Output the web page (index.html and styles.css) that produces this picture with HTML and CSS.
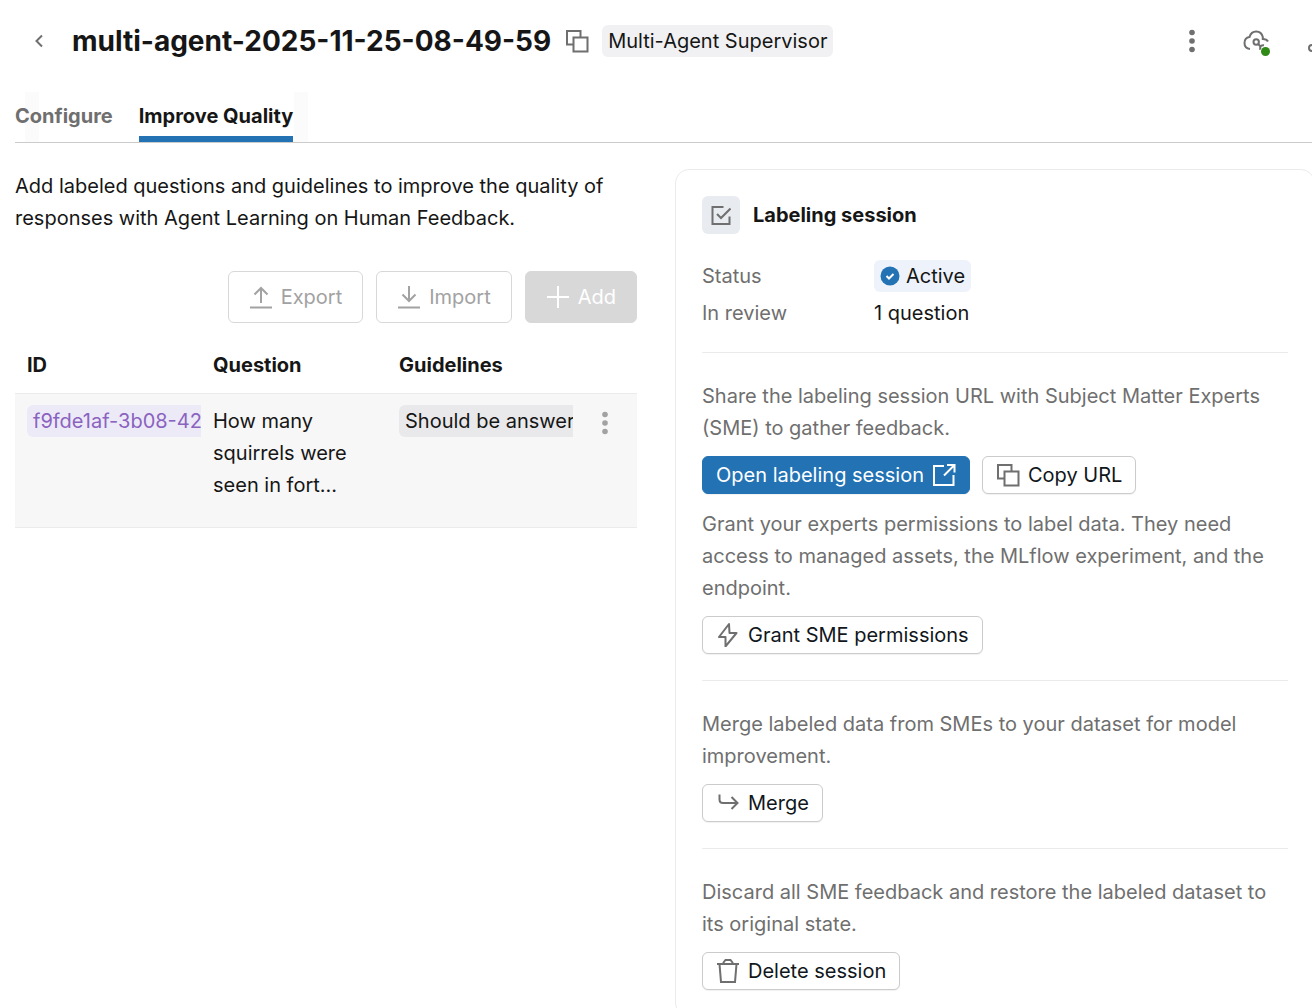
FILE: index.html
```
<!DOCTYPE html>
<html lang="en">
<head>
    <meta charset="UTF-8">
    <meta name="viewport" content="width=device-width, initial-scale=1.0">
    <title>multi-agent-2025-11-25-08-49-59</title>
    <link rel="stylesheet" href="styles.css">
</head>
<body>
    <!-- Shared icons -->
    <svg class="icon-defs" aria-hidden="true">
        <symbol id="icon-copy" viewBox="0 0 24 24">
            <path d="M8 15.500H2V2H15.500V8M8.500 8.500H22.500V22.500H8.500Z" fill="none" stroke="currentColor" stroke-width="2"/>
        </symbol>
        <symbol id="icon-dots" viewBox="0 0 24 24">
            <circle cx="12" cy="3.500" r="2.800"/>
            <circle cx="12" cy="12" r="2.800"/>
            <circle cx="12" cy="20.500" r="2.800"/>
        </symbol>
    </svg>

    <header class="page-header">
        <button class="icon-button back-button" aria-label="Back">
            <svg class="icon" viewBox="0 0 24 24"><path d="M15 6.500 9.500 12l5.500 5.500" fill="none" stroke="currentColor" stroke-width="2"/></svg>
        </button>
        <h1>multi-agent-2025-11-25-08-49-59</h1>
        <button class="icon-button copy-name" aria-label="Copy name">
            <svg class="icon"><use href="#icon-copy"/></svg>
        </button>
        <span class="tag">Multi-Agent Supervisor</span>
        <div class="header-actions">
            <button class="icon-button" aria-label="More">
                <svg class="icon" fill="currentColor"><use href="#icon-dots"/></svg>
            </button>
            <button class="icon-button status-button" aria-label="Endpoint status">
                <svg class="icon cloud-icon" viewBox="0 0 26 24" fill="none" stroke="currentColor" stroke-width="2">
                    <path d="M7 20C3.500 19.500 1.500 17 1.500 14C1.500 11 3.500 8.500 6.500 8C7.500 4.500 10 2.500 13.200 2.500C16.500 2.500 19 4.800 19.800 8V10C22 10 24 10.700 25 12.500"/>
                    <circle cx="13.200" cy="13" r="2.700"/>
                    <path d="M15.200 15 17.500 17.500M21 16.200C18.500 15.800 16.500 17.500 17.200 20.800"/>
                </svg>
                <span class="status-dot"></span>
            </button>
            <button class="icon-button" aria-label="Share">
                <svg class="icon" viewBox="0 0 24 24" fill="none" stroke="currentColor" stroke-width="2">
                    <circle cx="4" cy="19" r="3"/><circle cx="12" cy="5" r="3"/><circle cx="20" cy="19" r="3"/>
                    <path d="M10.500 8 6 16.500M13.500 8 18 16.500"/>
                </svg>
            </button>
        </div>
    </header>

    <nav class="tabs">
        <div class="tab-list">
            <a href="#configure">Configure</a>
            <a href="#quality" class="active">Improve Quality</a>
        </div>
    </nav>

    <main class="content">
        <section class="questions">
            <p>Add labeled questions and guidelines to improve the quality of responses with Agent Learning on Human Feedback.</p>
            <div class="toolbar">
                <button class="btn btn-large" disabled>
                    <svg class="icon" viewBox="0 0 24 24" fill="none" stroke="currentColor" stroke-width="2"><path d="M1 22.500H23M12 18V3M5.500 9.500 12 3l6.500 6.500"/></svg>
                    Export
                </button>
                <button class="btn btn-large" disabled>
                    <svg class="icon" viewBox="0 0 24 24" fill="none" stroke="currentColor" stroke-width="2"><path d="M1 22.500H23M12 1V16M5.500 9.500 12 16l6.500-6.500"/></svg>
                    Import
                </button>
                <button class="btn btn-large btn-add" disabled>
                    <svg class="icon" viewBox="0 0 24 24" fill="none" stroke="currentColor" stroke-width="2"><path d="M12 1V23M1 12H23"/></svg>
                    Add
                </button>
            </div>
            <table>
                <thead>
                    <tr>
                        <th>ID</th>
                        <th>Question</th>
                        <th>Guidelines</th>
                        <th class="actions-col" aria-label="Actions"></th>
                    </tr>
                </thead>
                <tbody>
                    <tr>
                        <td><div class="clip"><a href="#f9fde1af" class="tag tag-id">f9fde1af-3b08-42</a></div></td>
                        <td>How many squirrels were seen in fort...</td>
                        <td><div class="clip"><span class="tag tag-guideline">Should be answer</span></div></td>
                        <td class="actions-col">
                            <button class="icon-button row-menu" aria-label="Row actions">
                                <svg class="icon" fill="currentColor"><use href="#icon-dots"/></svg>
                            </button>
                        </td>
                    </tr>
                </tbody>
            </table>
        </section>

        <aside class="card">
            <div class="card-title">
                <span class="card-icon">
                    <svg viewBox="0 0 20 20" fill="none" stroke="currentColor" stroke-width="2"><path d="M12.500 2H1.500V19H18.500V11.500M6 9l4 4L19.500 3.500"/></svg>
                </span>
                <h2>Labeling session</h2>
            </div>
            <dl>
                <dt>Status</dt>
                <dd>
                    <span class="tag tag-active">
                        <svg viewBox="0 0 20 20"><circle cx="10" cy="10" r="9.500" fill="#2272b4"/><path d="M6.500 10l2.500 2.500 4.500-4.500" fill="none" stroke="#fff" stroke-width="2"/></svg>
                        Active
                    </span>
                </dd>
                <dt>In review</dt>
                <dd>1 question</dd>
            </dl>

            <div class="card-section">
                <p>Share the labeling session URL with Subject Matter Experts (SME) to gather feedback.</p>
                <div class="button-row">
                    <button class="btn btn-primary">
                        Open labeling session
                        <svg class="icon" viewBox="0 0 24 24" fill="none" stroke="currentColor" stroke-width="2"><path d="M12 3H2V22H21.500V12M15 2H22.500V9.500M22 2.500 12 12.500"/></svg>
                    </button>
                    <button class="btn">
                        <svg class="icon"><use href="#icon-copy"/></svg>
                        Copy URL
                    </button>
                </div>
                <p>Grant your experts permissions to label data. They need access to managed assets, the MLflow experiment, and the endpoint.</p>
                <div class="button-row">
                    <button class="btn">
                        <svg class="icon" viewBox="0 0 24 24" fill="none" stroke="currentColor" stroke-width="2" stroke-linejoin="round"><path d="M13 1 3 14H9.500V23.500L20.500 10H13.500Z"/></svg>
                        Grant SME permissions
                    </button>
                </div>
            </div>

            <div class="card-section">
                <p>Merge labeled data from SMEs to your dataset for model improvement.</p>
                <div class="button-row">
                    <button class="btn">
                        <svg class="icon" viewBox="0 0 24 24" fill="none" stroke="currentColor" stroke-width="2"><path d="M3.500 3.500V8.500Q3.500 12 7 12H21M15.500 6 21.500 12l-6 6"/></svg>
                        Merge
                    </button>
                </div>
            </div>

            <div class="card-section">
                <p>Discard all SME feedback and restore the labeled dataset to its original state.</p>
                <div class="button-row">
                    <button class="btn">
                        <svg class="icon" viewBox="0 0 24 24" fill="none" stroke="currentColor" stroke-width="2"><path d="M1 5H23M7.500 5V3.500L9.500 1H14.500L16.500 3.500V5M3.500 5 5 23H19L20.500 5"/></svg>
                        Delete session
                    </button>
                </div>
            </div>
        </aside>
    </main>
</body>
</html>
```
FILE: styles.css
```
* {
    box-sizing: border-box;
}
body {
    font-family: Inter, Arial, sans-serif;
    font-size: 20px;
    line-height: 32px;
    color: #161616;
    margin: 0;
    padding-left: 15px;
    background-color: white;
    overflow-x: hidden;
}
h1, h2, p, dl, dd {
    margin: 0;
}
button {
    font: inherit;
    cursor: pointer;
}
.icon-defs {
    display: none;
}
.icon {
    width: 24px;
    height: 24px;
    flex: none;
}

/* Header */
.page-header {
    display: flex;
    align-items: center;
    height: 82px;
    margin-right: -20px;
}
.page-header h1 {
    font-size: 28px;
    font-weight: 700;
    white-space: nowrap;
}
.icon-button {
    display: flex;
    padding: 0;
    border: 0;
    background: none;
    color: #6f6f6f;
}
.back-button {
    margin: 0 21px 0 12px;
}
.copy-name {
    margin: 0 13px 0 14px;
}
.tag {
    display: inline-block;
    padding: 0 6px;
    border-radius: 6px;
    background-color: #f1f1f3;
    white-space: nowrap;
}
.header-actions {
    display: flex;
    align-items: center;
    gap: 39px;
    margin-left: auto;
}
.status-button {
    position: relative;
}
.cloud-icon {
    width: 26px;
}
.status-dot {
    position: absolute;
    right: -1px;
    bottom: -3px;
    width: 9px;
    height: 9px;
    border-radius: 50%;
    background-color: #2f8a16;
}

/* Tabs */
.tabs {
    margin-top: 10px;
    border-bottom: 1px solid #cbcbcb;
}
.tab-list {
    display: inline-flex;
    gap: 26px;
    height: 50px;
    padding-right: 15px;
    vertical-align: top;
    background-image: linear-gradient(#fbfbfb, #fbfbfb), linear-gradient(#fbfbfb, #fbfbfb);
    background-repeat: no-repeat;
    background-size: 14px 100%;
    background-position: 10px 0, 100% 0;
}
.tab-list a {
    padding-top: 8px;
    font-weight: 700;
    color: #6f6f6f;
    text-decoration: none;
}
.tab-list .active {
    color: #161616;
    border-bottom: 6px solid #2272b4;
}

/* Content */
.content {
    display: grid;
    grid-template-columns: 622fr 640fr;
    gap: 38px;
    margin: 26px -3px 0 0;
}
.questions {
    padding-top: 1px;
}
.toolbar {
    display: flex;
    justify-content: flex-end;
    gap: 13px;
    margin: 37px 0 13px;
}
.btn {
    display: flex;
    align-items: center;
    gap: 8px;
    height: 38px;
    padding: 0 13px;
    border: 1px solid #cbcbcb;
    border-radius: 6px;
    background-color: white;
    color: #11171c;
    white-space: nowrap;
    box-shadow: 0 1px 1px rgba(0, 0, 0, 0.06);
}
.btn .icon {
    color: #6f6f6f;
}
.btn-large {
    height: 52px;
    padding: 0 20px;
    box-shadow: none;
}
.btn:disabled {
    color: #a2a2a2;
    border-color: #d8d8d8;
    cursor: default;
}
.btn:disabled .icon,
.btn-primary .icon {
    color: inherit;
}
.btn-add:disabled {
    background-color: #d8d8d8;
    color: white;
}
.btn-primary {
    background-color: #2272b4;
    border-color: #2272b4;
    color: white;
}

/* Table */
table {
    width: 100%;
    table-layout: fixed;
    border-collapse: collapse;
}
th {
    padding: 13px 0 12px 12px;
    font-weight: 700;
    text-align: left;
}
td {
    height: 134px;
    padding: 11px 0 0 12px;
    vertical-align: top;
}
tbody tr {
    background-color: #f7f7f7;
    border-top: 1px solid #ebebeb;
    border-bottom: 1px solid #ebebeb;
}
.actions-col {
    width: 64px;
}
.clip {
    display: flex;
    overflow: hidden;
}
.tag-id {
    background-color: #edeaf8;
    color: #8a63bf;
    text-decoration: none;
}
.tag-guideline {
    background-color: #e9e9eb;
}
.row-menu {
    margin: 6px 0 0 8px;
    color: #a2a2a2;
}

/* Labeling session card */
.card {
    padding: 26px;
    border: 1px solid #ebebeb;
    border-radius: 14px;
    color: #6f6f6f;
}
.card-title {
    display: flex;
    align-items: center;
    gap: 13px;
}
.card-icon {
    display: flex;
    padding: 9px;
    border-radius: 6px;
    background-color: #e8ebf0;
}
.card-icon svg,
.tag-active svg {
    width: 20px;
    height: 20px;
}
.card h2 {
    font-size: 20px;
    font-weight: 700;
    color: #161616;
}
dl {
    display: grid;
    grid-template-columns: 172px 1fr;
    row-gap: 5px;
    margin: 26px 0 23px;
}
dd {
    display: flex;
    color: #161616;
}
.tag-active {
    display: flex;
    align-items: center;
    gap: 6px;
    background-color: #eef3fb;
}
.card-section {
    padding: 27px 0 26px;
    border-top: 1px solid #ebebeb;
}
.card-section:last-child {
    padding-bottom: 0;
}
.button-row {
    display: flex;
    gap: 12px;
    margin-top: 12px;
}
.button-row + p {
    margin-top: 14px;
}
```
